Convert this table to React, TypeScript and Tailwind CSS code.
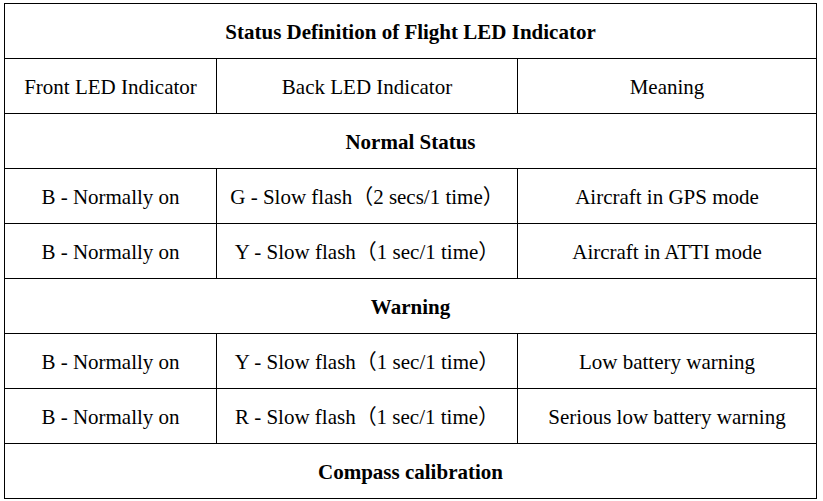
import React from 'react';

const rows: (string[] | string)[] = [
  'Normal Status',
  ['B - Normally on', 'G - Slow flash（2 secs/1 time）', 'Aircraft in GPS mode'],
  ['B - Normally on', 'Y - Slow flash（1 sec/1 time）', 'Aircraft in ATTI mode'],
  'Warning',
  ['B - Normally on', 'Y - Slow flash（1 sec/1 time）', 'Low battery warning'],
  ['B - Normally on', 'R - Slow flash（1 sec/1 time）', 'Serious low battery warning'],
  'Compass calibration',
];

const cell = 'border border-black p-0 pt-[2px] h-[55px] text-center align-middle';

const App = () => {
  return (
    <div
      className="w-[823px] h-[501px] bg-white pl-[4px] pt-[3px] text-black text-[21px] leading-none overflow-hidden"
      style={{ fontFamily: '"Liberation Serif", "Noto Sans CJK SC", serif' }}
    >
      <table className="w-[812px] table-fixed border-collapse">
        <colgroup>
          <col className="w-[212px]" />
          <col className="w-[301px]" />
          <col className="w-[299px]" />
        </colgroup>
        <tbody>
          <tr>
            <td colSpan={3} className={`${cell} font-bold`}>
              Status Definition of Flight LED Indicator
            </td>
          </tr>
          <tr>
            <td className={cell}>Front LED Indicator</td>
            <td className={cell}>Back LED Indicator</td>
            <td className={cell}>Meaning</td>
          </tr>
          {rows.map((row, i) =>
            typeof row === 'string' ? (
              <tr key={i}>
                <td colSpan={3} className={`${cell} font-bold`}>
                  {row}
                </td>
              </tr>
            ) : (
              <tr key={i}>
                {row.map((text, j) => (
                  <td key={j} className={cell}>
                    {text}
                  </td>
                ))}
              </tr>
            )
          )}
        </tbody>
      </table>
    </div>
  );
};

export default App;
